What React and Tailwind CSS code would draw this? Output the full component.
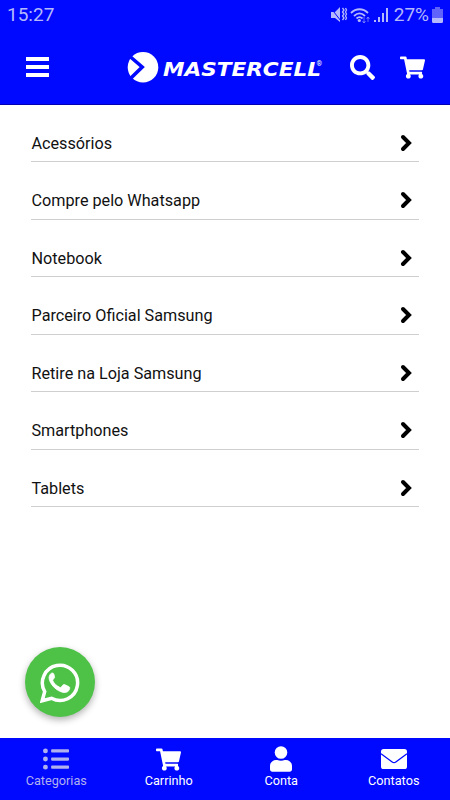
import React from 'react';
import { FaSearch, FaShoppingCart, FaListUl } from 'react-icons/fa';

const categories = [
  'Acessórios',
  'Compre pelo Whatsapp',
  'Notebook',
  'Parceiro Oficial Samsung',
  'Retire na Loja Samsung',
  'Smartphones',
  'Tablets',
];

function UserIcon() {
  return (
    <svg width="22" height="26" viewBox="0 0 22 26" fill="currentColor">
      <circle cx="11" cy="6.5" r="6.3" />
      <path d="M6 14h1.2c2.4 1.1 5.2 1.1 7.6 0H16c3.4 0 6 2.7 6 6v3.2c0 1.5-1 2.5-2.4 2.5H2.4C1 25.7 0 24.7 0 23.2V20c0-3.3 2.6-6 6-6z" />
    </svg>
  );
}

function MailIcon() {
  return (
    <svg width="26" height="20" viewBox="0 0 26 20">
      <rect width="26" height="20" rx="2.6" fill="currentColor" />
      <path d="M0 4.800l11.200 8.200c1.200.9 2.400.9 3.600 0L26 4.800" fill="none" stroke="#0009ff" strokeWidth="1.300" />
    </svg>
  );
}

function WhatsappIcon() {
  return (
    <svg className="mt-[2px]" width="40" height="40" viewBox="0 0 40 40">
      <path
        d="M2.200 37.800L4.700 28.600A17.600 17.600 0 1 1 11.500 35.300z"
        fill="none"
        stroke="currentColor"
        strokeWidth="3.500"
      />
      <path
        d="M13.700 10.700c-.5-.9-2.200-.9-3 .1-1.400 1.600-2.100 3.600-1.300 6.100 2 6 7.500 11 13.700 12.500 3.100.7 6.100-1 6.500-3.600.2-1.100.1-1.700-.6-2.100l-4.400-2.100c-.7-.3-1.200-.1-1.600.4l-1.700 2.100c-.4.5-.9.5-1.500.2-3.100-1.400-5.400-3.500-6.900-6.300-.3-.6-.2-1 .2-1.500l1.300-1.700c.3-.4.3-.8.1-1.300z"
        fill="currentColor"
        stroke="currentColor"
        strokeWidth=".8"
      />
    </svg>
  );
}

const tabs = [
  { label: 'Categorias', icon: <FaListUl size={26} />, active: true },
  { label: 'Carrinho', icon: <FaShoppingCart size={25} /> },
  { label: 'Conta', icon: <UserIcon /> },
  { label: 'Contatos', icon: <MailIcon /> },
];

function StatusBar() {
  return (
    <div className="flex h-[30px] items-center justify-between px-[7px] text-[#b4b9fb]">
      <span className="text-[19px] leading-[30px]">15:27</span>
      <div className="flex items-center">
        <svg width="64" height="20" viewBox="0 0 64 20" fill="none" stroke="currentColor" strokeWidth="1.4">
          <path d="M1 7h4l5-5v15l-5-4H1z" fill="currentColor" stroke="none" />
          <path d="M0 2l11 14" stroke="#0009ff" strokeWidth="1" />
          <path d="M12.500 3l1.500 2-1.500 2 1.500 2-1.500 2 1.500 2-1.500 2M15.500 3l1 2-1 2 1 2-1 2 1 2-1 2" strokeWidth="1.300" />
          <path d="M21 8c5-5 12-5 17 0M24 11c3.400-3.300 7.600-3.300 11 0M26.500 13.500c2-1.800 4-1.800 6 0" strokeWidth="1.800" />
          <circle cx="29.300" cy="15.500" r="1.600" fill="currentColor" stroke="none" />
          <path d="M34 12v6m-1.500-2l1.500 2 1.500-2M38 17v-5m-1.500 2l1.500-2 1.500 2" strokeWidth="1" opacity=".55" />
          <path d="M45 17v-2M49 17v-5M53 17V8M57 17V3" strokeWidth="2" />
        </svg>
        <span className="text-[19px] leading-[30px]">27%</span>
        <svg className="ml-[3px]" width="11" height="16" viewBox="0 0 11 16">
          <path d="M3 0h5v2h3v9H0V2h3z" fill="#5f63fb" />
          <path d="M0 11h11v3.500c0 .8-.5 1.500-1.300 1.500H1.300C.5 16 0 15.300 0 14.500z" fill="currentColor" />
        </svg>
      </div>
    </div>
  );
}

function Logo() {
  return (
    <svg width="198" height="32" viewBox="0 0 198 32" fill="#fff">
      <circle cx="16" cy="16.200" r="15.300" />
      <path d="M3 5.500L15.200 16 4 27" fill="none" stroke="#0009ff" strokeWidth="3.600" />
      <text
        x="36"
        y="24.600"
        textLength="158"
        lengthAdjust="spacingAndGlyphs"
        className="font-['DejaVu_Sans',sans-serif] text-[20px] font-bold italic"
      >
        MASTERCELL
      </text>
      <text x="189.500" y="14.500" className="font-[Roboto,sans-serif] text-[7px]">®</text>
    </svg>
  );
}

export default function App() {
  return (
    <div className="flex h-[800px] w-[450px] flex-col overflow-hidden bg-white font-[Roboto,sans-serif]">
      <header className="h-[105px] shrink-0 border-b border-[#0000b0] bg-[#0009ff]">
        <StatusBar />
        <div className="flex h-[74px] items-center pl-[26px] pr-[25px] text-white">
          <button className="flex w-[23px] flex-col gap-[4.5px]" aria-label="Menu">
            <span className="h-[3.5px] bg-white" />
            <span className="h-[3.5px] bg-white" />
            <span className="h-[3.5px] bg-white" />
          </button>
          <div className="ml-[78px]">
            <Logo />
          </div>
          <FaSearch className="ml-auto" size={25} />
          <FaShoppingCart className="ml-[25px]" size={25} />
        </div>
      </header>

      <main className="-mt-[0.5px] flex-1 px-[31px]">
        {categories.map((name) => (
          <div
            key={name}
            className="flex h-[57.5px] items-end justify-between border-b border-[#cfcfcf] pb-[8.5px]"
          >
            <span className="pl-[0.5px] text-[16.2px] leading-[19px] text-[#111]">{name}</span>
            <svg className="mr-[7px] mb-[1px]" width="12" height="18" viewBox="0 0 12 18" fill="none" stroke="#000" strokeWidth="4">
              <path d="M3 3L9 9l-6 6" strokeLinecap="round" />
            </svg>
          </div>
        ))}
      </main>

      <button
        className="absolute left-[25px] top-[647px] flex size-[70px] items-center justify-center rounded-full bg-[#4dc247] text-white shadow-[0_3px_7px_rgba(0,0,0,0.3)]"
        aria-label="Whatsapp"
      >
        <WhatsappIcon />
      </button>

      <nav className="grid h-[62px] shrink-0 grid-cols-4 bg-[#0009ff]">
        {tabs.map((tab) => (
          <div
            key={tab.label}
            className={`flex flex-col items-center ${tab.active ? 'text-[#b0b0ee]' : 'text-white'}`}
          >
            <div className="mt-[8px] flex h-[26px] items-center">{tab.icon}</div>
            <span className="text-[12.7px] leading-[18px]">{tab.label}</span>
          </div>
        ))}
      </nav>
    </div>
  );
}
